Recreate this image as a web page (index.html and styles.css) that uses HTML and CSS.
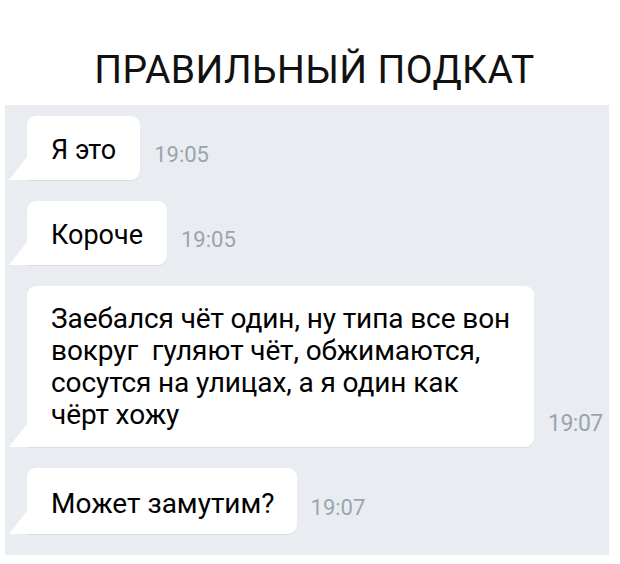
FILE: index.html
```html
<!DOCTYPE html>
<html lang="ru">
<head>
    <meta charset="UTF-8">
    <meta name="viewport" content="width=device-width, initial-scale=1.0">
    <title>Правильный подкат</title>
    <link rel="stylesheet" href="styles.css">
</head>
<body>
    <div class="header">
        <h1 class="title">ПРАВИЛЬНЫЙ ПОДКАТ</h1>
    </div>

    <div class="chat">
        <div class="msg">
            <div class="bubble">Я это</div>
            <span class="time">19:05</span>
        </div>

        <div class="msg">
            <div class="bubble">Короче</div>
            <span class="time">19:05</span>
        </div>

        <div class="msg">
            <div class="bubble bubble-long">Заебался чёт один, ну типа все вон<br>вокруг&nbsp; гуляют чёт, обжимаются,<br>сосутся на улицах, а я один как<br>чёрт хожу</div>
            <span class="time time-long">19:07</span>
        </div>

        <div class="msg">
            <div class="bubble bubble-big">Может замутим?</div>
            <span class="time time-big">19:07</span>
        </div>
    </div>
</body>
</html>
```

FILE: styles.css
```css
/* Page */
body {
    margin: 0;
    background-color: #fff;
    font-family: Roboto, "Noto Sans", Arial, sans-serif;
    color: #000;
}

.header {
    height: 105px;
    box-sizing: border-box;
    padding: 51px 0 0 9px;
    display: flex;
    justify-content: center;
    align-items: flex-start;
}
.title {
    margin: 0;
    font-size: 39px;
    line-height: 39px;
    font-weight: 400;
    letter-spacing: 0.4px;
    color: #111;
}

/* Chat panel */
.chat {
    width: 604px;
    height: 450px;
    margin-left: 5px;
    box-sizing: border-box;
    padding: 11px 0 0 22px;
    background-color: #e9edf2;
    display: flex;
    flex-direction: column;
    align-items: flex-start;
    gap: 21px;
}
.msg {
    display: flex;
    align-items: flex-end;
    gap: 14px;
}
.bubble {
    position: relative;
    background-color: #fff;
    border-radius: 9px 9px 9px 0;
    box-shadow: 0 1px 1px rgba(0, 0, 0, 0.07);
    padding: 18px 24px 14px 24px;
    font-size: 27px;
    line-height: 32px;
    white-space: nowrap;
}
.bubble::before {
    content: "";
    position: absolute;
    left: -18px;
    bottom: 0;
    width: 18px;
    height: 23px;
    background-color: #fff;
    clip-path: polygon(100% 0, 100% 100%, 0 100%);
}
.bubble-long {
    width: 507px;
    box-sizing: border-box;
    padding: 17px 24px 16px 24px;
    font-size: 28px;
    line-height: 32px;
    letter-spacing: -0.1px;
}
.bubble-big {
    padding: 20px 22px 14px 24px;
    font-size: 28px;
}

.time {
    font-size: 22px;
    line-height: 1;
    color: #9ba4ae;
    padding-bottom: 14px;
}
.time-long {
    font-size: 23px;
    letter-spacing: -0.5px;
    padding-bottom: 12px;
}
.time-big {
    padding-bottom: 15px;
}
```
